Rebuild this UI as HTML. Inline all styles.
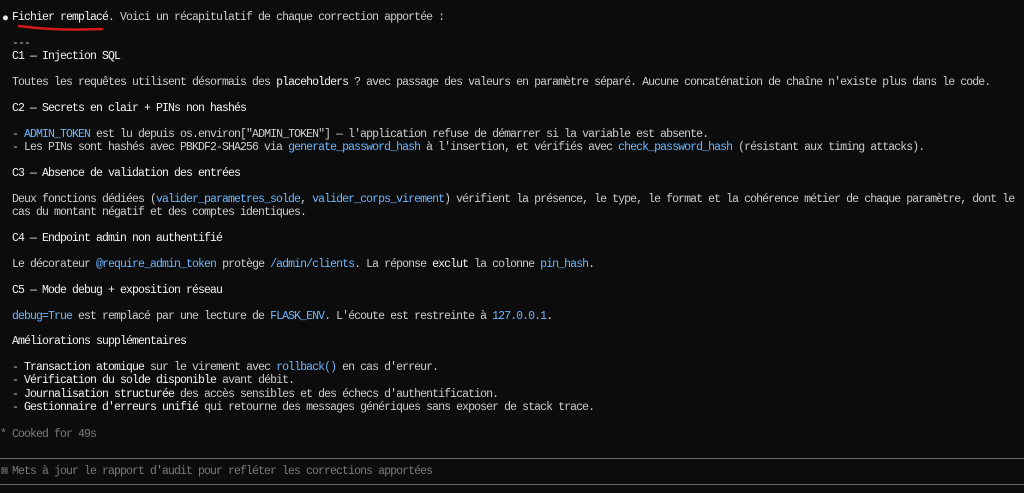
<!DOCTYPE html>
<html><head><meta charset="utf-8"><style>
html,body{margin:0;padding:0;background:#0c0c0c;width:1024px;height:493px;overflow:hidden}
.l{position:absolute;left:12px;font-family:"Liberation Mono",monospace;font-size:11.5px;letter-spacing:-0.9px;color:#cccccc;white-space:pre;line-height:13px}
b{font-weight:normal;color:#f2f2f2}
.c{color:#6cb6ff}
.d{color:#7a7a7a}
</style></head><body>
<div class="l" style="left:2px;top:12px;color:#e6e6e6">●</div>
<div class="l" style="top:11px"><b>Fichier remplacé</b>. Voici un récapitulatif de chaque correction apportée :</div>
<svg style="position:absolute;left:16px;top:23px" width="90" height="10"><path d="M3 3 Q40 8 86 6" stroke="#d61a1a" stroke-width="2.5" fill="none" stroke-linecap="round"/></svg>
<div class="l" style="top:37px">---</div>
<div class="l" style="top:50px"><b>C1 — Injection SQL</b></div>
<div class="l" style="top:76px">Toutes les requêtes utilisent désormais des <b>placeholders</b> ? avec passage des valeurs en paramètre séparé. Aucune concaténation de chaîne n'existe plus dans le code.</div>
<div class="l" style="top:102px"><b>C2 — Secrets en clair + PINs non hashés</b></div>
<div class="l" style="top:128px">- <span class="c">ADMIN_TOKEN</span> est lu depuis os.environ["ADMIN_TOKEN"] — l'application refuse de démarrer si la variable est absente.</div>
<div class="l" style="top:141px">- Les PINs sont hashés avec PBKDF2-SHA256 via <span class="c">generate_password_hash</span> à l'insertion, et vérifiés avec <span class="c">check_password_hash</span> (résistant aux timing attacks).</div>
<div class="l" style="top:167px"><b>C3 — Absence de validation des entrées</b></div>
<div class="l" style="top:193px">Deux fonctions dédiées (<span class="c">valider_parametres_solde</span>, <span class="c">valider_corps_virement</span>) vérifient la présence, le type, le format et la cohérence métier de chaque paramètre, dont le</div>
<div class="l" style="top:206px">cas du montant négatif et des comptes identiques.</div>
<div class="l" style="top:232px"><b>C4 — Endpoint admin non authentifié</b></div>
<div class="l" style="top:258px">Le décorateur <span class="c">@require_admin_token</span> protège <span class="c">/admin/clients</span>. La réponse <b>exclut</b> la colonne <span class="c">pin_hash</span>.</div>
<div class="l" style="top:284px"><b>C5 — Mode debug + exposition réseau</b></div>
<div class="l" style="top:310px"><span class="c">debug=True</span> est remplacé par une lecture de <span class="c">FLASK_ENV</span>. L'écoute est restreinte à <span class="c">127.0.0.1</span>.</div>
<div class="l" style="top:335px"><b>Améliorations supplémentaires</b></div>
<div class="l" style="top:361px">- <b>Transaction atomique</b> sur le virement avec <span class="c">rollback()</span> en cas d'erreur.</div>
<div class="l" style="top:374px">- <b>Vérification du solde disponible</b> avant débit.</div>
<div class="l" style="top:388px">- <b>Journalisation structurée</b> des accès sensibles et des échecs d'authentification.</div>
<div class="l" style="top:401px">- <b>Gestionnaire d'erreurs unifié</b> qui retourne des messages génériques sans exposer de stack trace.</div>
<div class="l d" style="left:0;top:428px">*</div>
<div class="l d" style="top:428px">Cooked for 49s</div>
<div style="position:absolute;left:0;top:458px;width:1024px;height:1px;background:#6a6a6a"></div>
<div class="l d" style="left:1px;top:465px">⊠</div>
<div class="l d" style="top:465px">Mets à jour le rapport d'audit pour refléter les corrections apportées</div>
<div style="position:absolute;left:0;top:484px;width:1024px;height:1px;background:#6a6a6a"></div>
</body></html>
